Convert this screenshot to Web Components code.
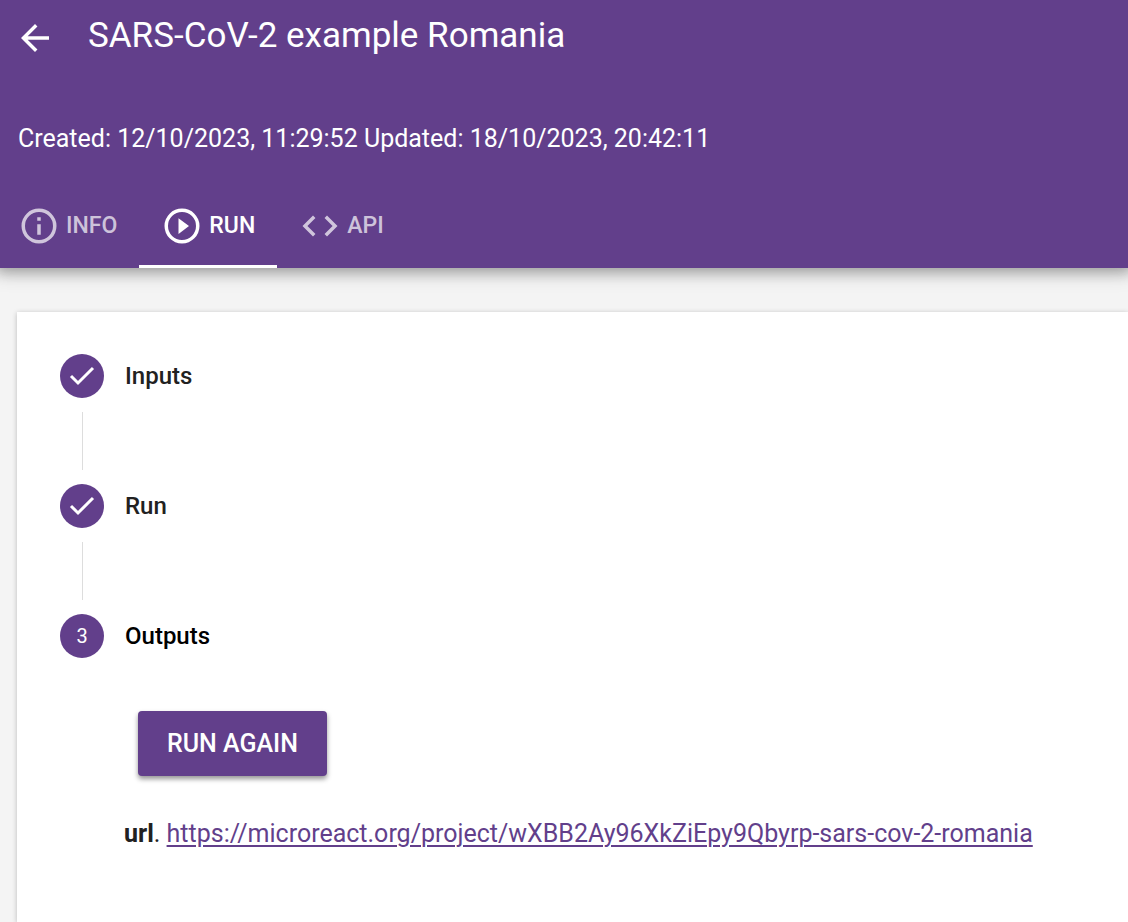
<!DOCTYPE html>
<html lang="en">
<head>
<meta charset="utf-8">
<meta name="viewport" content="width=device-width, initial-scale=1">
<title>SARS-CoV-2 example Romania</title>
<style>
:root{--brand:#623f8b}
html,body{margin:0;background:#f4f4f4}
body{font-family:Roboto,"Liberation Sans",sans-serif;font-size:25px;line-height:32px;color:#212121}
</style>
</head>
<body>
<run-page></run-page>
<script>
const define=(name,html)=>{
  const t=document.createElement('template');
  t.innerHTML=html;
  customElements.define(name,class extends HTMLElement{
    constructor(){super();this.attachShadow({mode:'open'}).append(t.content.cloneNode(true));}
  });
};

define('nav-tab',`
<style>
:host{display:block}
a{display:flex;align-items:center;gap:6px;box-sizing:border-box;height:84px;padding:0 22px;color:rgba(255,255,255,.7);font-size:23px;font-weight:500;text-decoration:none;border-bottom:3px solid transparent;border-top:3px solid transparent}
:host([active]) a{color:#fff;border-bottom-color:#fff}
</style>
<a href="#"><slot name="icon"></slot><span><slot></slot></span></a>`);

define('project-header',`
<style>
:host{display:block;position:relative;z-index:1;background:var(--brand);color:#fff;box-shadow:0 0 20px 4px rgba(0,0,0,.2),0 0 12px 4px rgba(0,0,0,.24)}
.title{display:flex;align-items:center;gap:32px;height:76px;padding:0 14px}
button{display:flex;padding:0;border:0;background:none;color:inherit;cursor:pointer}
h1{margin:0;padding-bottom:4px;font-size:35px;line-height:44px;font-weight:400}
.dates{margin:0;padding:47px 18px 29px}
nav{display:flex;margin-left:-4px}
nav-tab svg{width:42px;height:42px;fill:currentColor}
</style>
<div class="title">
<button aria-label="Back"><svg width="42" height="42" viewBox="0 0 24 24" fill="currentColor"><path d="M20 11H7.8l5.6-5.6L12 4l-8 8 8 8 1.4-1.4L7.8 13H20z"/></svg></button>
<h1>SARS-CoV-2 example Romania</h1>
</div>
<p class="dates">Created: 12/10/2023, 11:29:52 Updated: 18/10/2023, 20:42:11</p>
<nav>
<nav-tab><svg slot="icon" viewBox="0 0 24 24"><path d="M11 9h2V7h-2zm1 11a8 8 0 1 1 0-16 8 8 0 0 1 0 16zm0-18a10 10 0 1 0 0 20 10 10 0 0 0 0-20zm-1 15h2v-6h-2z"/></svg>INFO</nav-tab>
<nav-tab active><svg slot="icon" viewBox="0 0 24 24"><path d="M12 20a8 8 0 1 1 0-16 8 8 0 0 1 0 16zm0-18a10 10 0 1 0 0 20 10 10 0 0 0 0-20zm-2 14.5 6-4.5-6-4.5z"/></svg>RUN</nav-tab>
<nav-tab><svg slot="icon" viewBox="0 0 24 24"><path d="M14.6 16.6l4.6-4.6-4.6-4.6L16 6l6 6-6 6zm-5.2 0L4.8 12l4.6-4.6L8 6l-6 6 6 6z"/></svg>API</nav-tab>
</nav>`);

define('step-item',`
<style>
:host{display:block}
.head{display:flex;align-items:center;gap:21px;height:44px}
.dot{display:flex;align-items:center;justify-content:center;width:44px;height:44px;border-radius:50%;background:var(--brand);color:#fff;font-size:20px}
h2{margin:0;font-size:24px;line-height:32px;font-weight:500;color:#212121}
:host([last]) h2{color:#000}
.line{width:1px;height:58px;margin:14px 22px;background:#ddd}
:host([last]) .line{display:none}
</style>
<div class="head"><span class="dot"><slot name="mark"></slot></span><h2><slot></slot></h2></div>
<div class="line"></div>`);

define('check-mark',`
<style>:host{display:flex}</style>
<svg width="28" height="28" viewBox="0 0 28 28" fill="none" stroke="#fff" stroke-width="3"><path d="M3 14l7 7L25 6"/></svg>`);

define('output-panel',`
<style>
:host{display:block;padding:53px 0 72px 64px}
button{display:block;height:65px;margin:0 0 42px 14px;padding:0 29px;border:0;border-radius:4px;background:var(--brand);color:#fff;font:500 25px/32px Roboto,"Liberation Sans",sans-serif;box-shadow:0 3px 5px rgba(0,0,0,.42);cursor:pointer}
p{margin:0}
b{font-weight:700}
a{color:var(--brand);text-decoration-thickness:2px;text-underline-offset:3px}
</style>
<button>RUN AGAIN</button>
<p><b>url</b>. <a href="https://microreact.org/project/wXBB2Ay96XkZiEpy9Qbyrp-sars-cov-2-romania">https://microreact.org/project/wXBB2Ay96XkZiEpy9Qbyrp-sars-cov-2-romania</a></p>`);

define('run-page',`
<style>
:host{display:flex;flex-direction:column;min-height:100vh;overflow:hidden}
main{flex:1;margin:44px 0 0 17px;padding:42px 43px 0;background:#fff;box-shadow:0 1px 5px rgba(0,0,0,.24)}
</style>
<project-header></project-header>
<main>
<step-item><check-mark slot="mark"></check-mark>Inputs</step-item>
<step-item><check-mark slot="mark"></check-mark>Run</step-item>
<step-item last><span slot="mark">3</span>Outputs</step-item>
<output-panel></output-panel>
</main>`);
</script>
</body>
</html>
